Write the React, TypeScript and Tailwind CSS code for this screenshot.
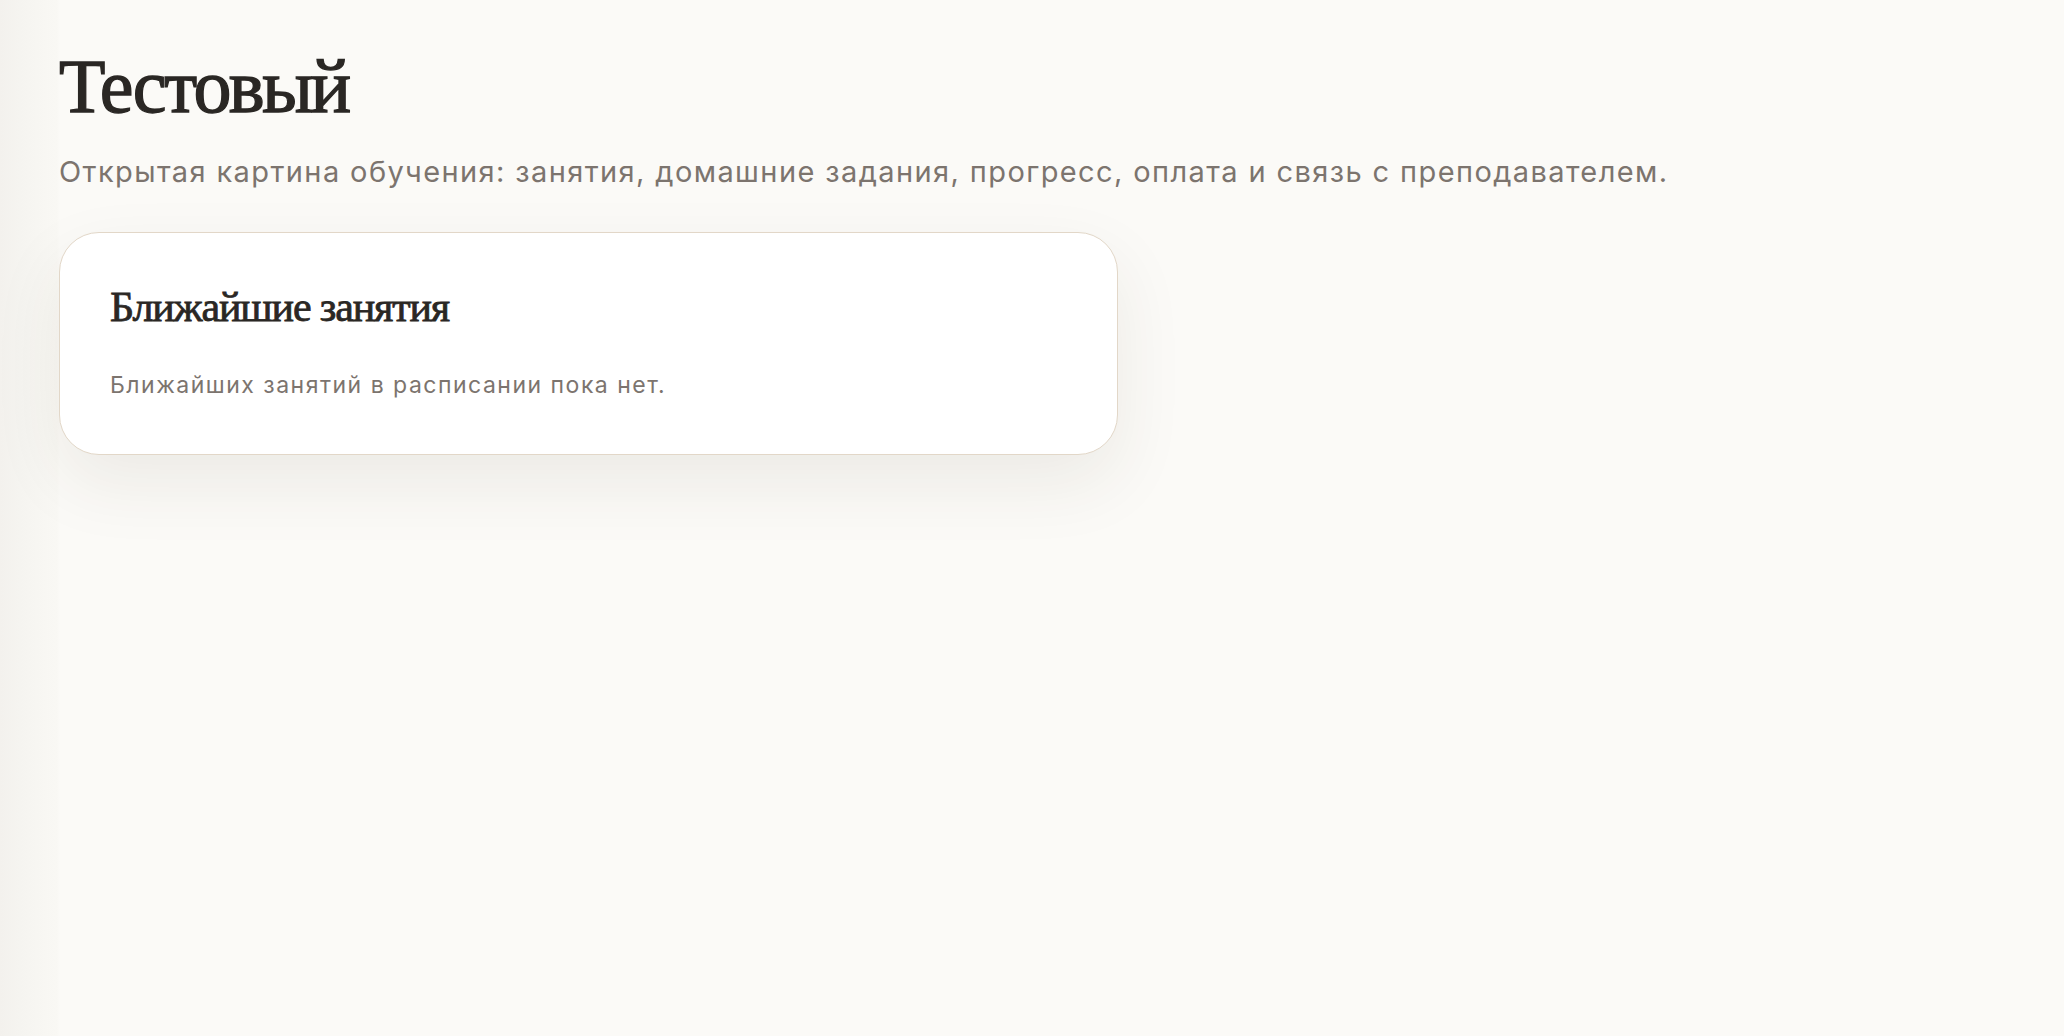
import React from "react";

export default function App() {
  return (
    <div className="min-h-screen w-full bg-[#fbfaf7] bg-[linear-gradient(to_right,#f3f1ed_0px,#f5f4f0_20px,#f8f7f3_45px,#f9f8f4_57px,#fbfaf7_60px)]">
      <main className="px-[59px] pt-[48px] pb-16">
        <h1 className="font-['Liberation_Serif',serif] text-[76px] leading-[76px] tracking-[-0.035em] text-[#2a2724] [-webkit-text-stroke:1.3px_#2a2724]">
          Тестовый
        </h1>
        <p className="mt-[30px] font-['Inter',sans-serif] text-[29px] leading-[36px] tracking-[0.048em] text-[#7c746e]">
          Открытая картина обучения: занятия, домашние задания, прогресс, оплата и связь с преподавателем.
        </p>
        <section className="mt-[42px] w-[1059px] rounded-[40px] border border-[#e2d7c8] bg-white px-[50px] pt-[50px] pb-[54px] shadow-[0_28px_70px_rgba(70,50,30,0.08)]">
          <h2 className="font-['Liberation_Serif',serif] text-[42px] leading-[48px] tracking-[-0.027em] text-[#2a2724] [-webkit-text-stroke:0.8px_#2a2724]">
            Ближайшие занятия
          </h2>
          <p className="mt-[39px] font-['Inter',sans-serif] text-[23px] leading-[30px] tracking-[0.065em] text-[#7c746e]">
            Ближайших занятий в расписании пока нет.
          </p>
        </section>
      </main>
    </div>
  );
}
